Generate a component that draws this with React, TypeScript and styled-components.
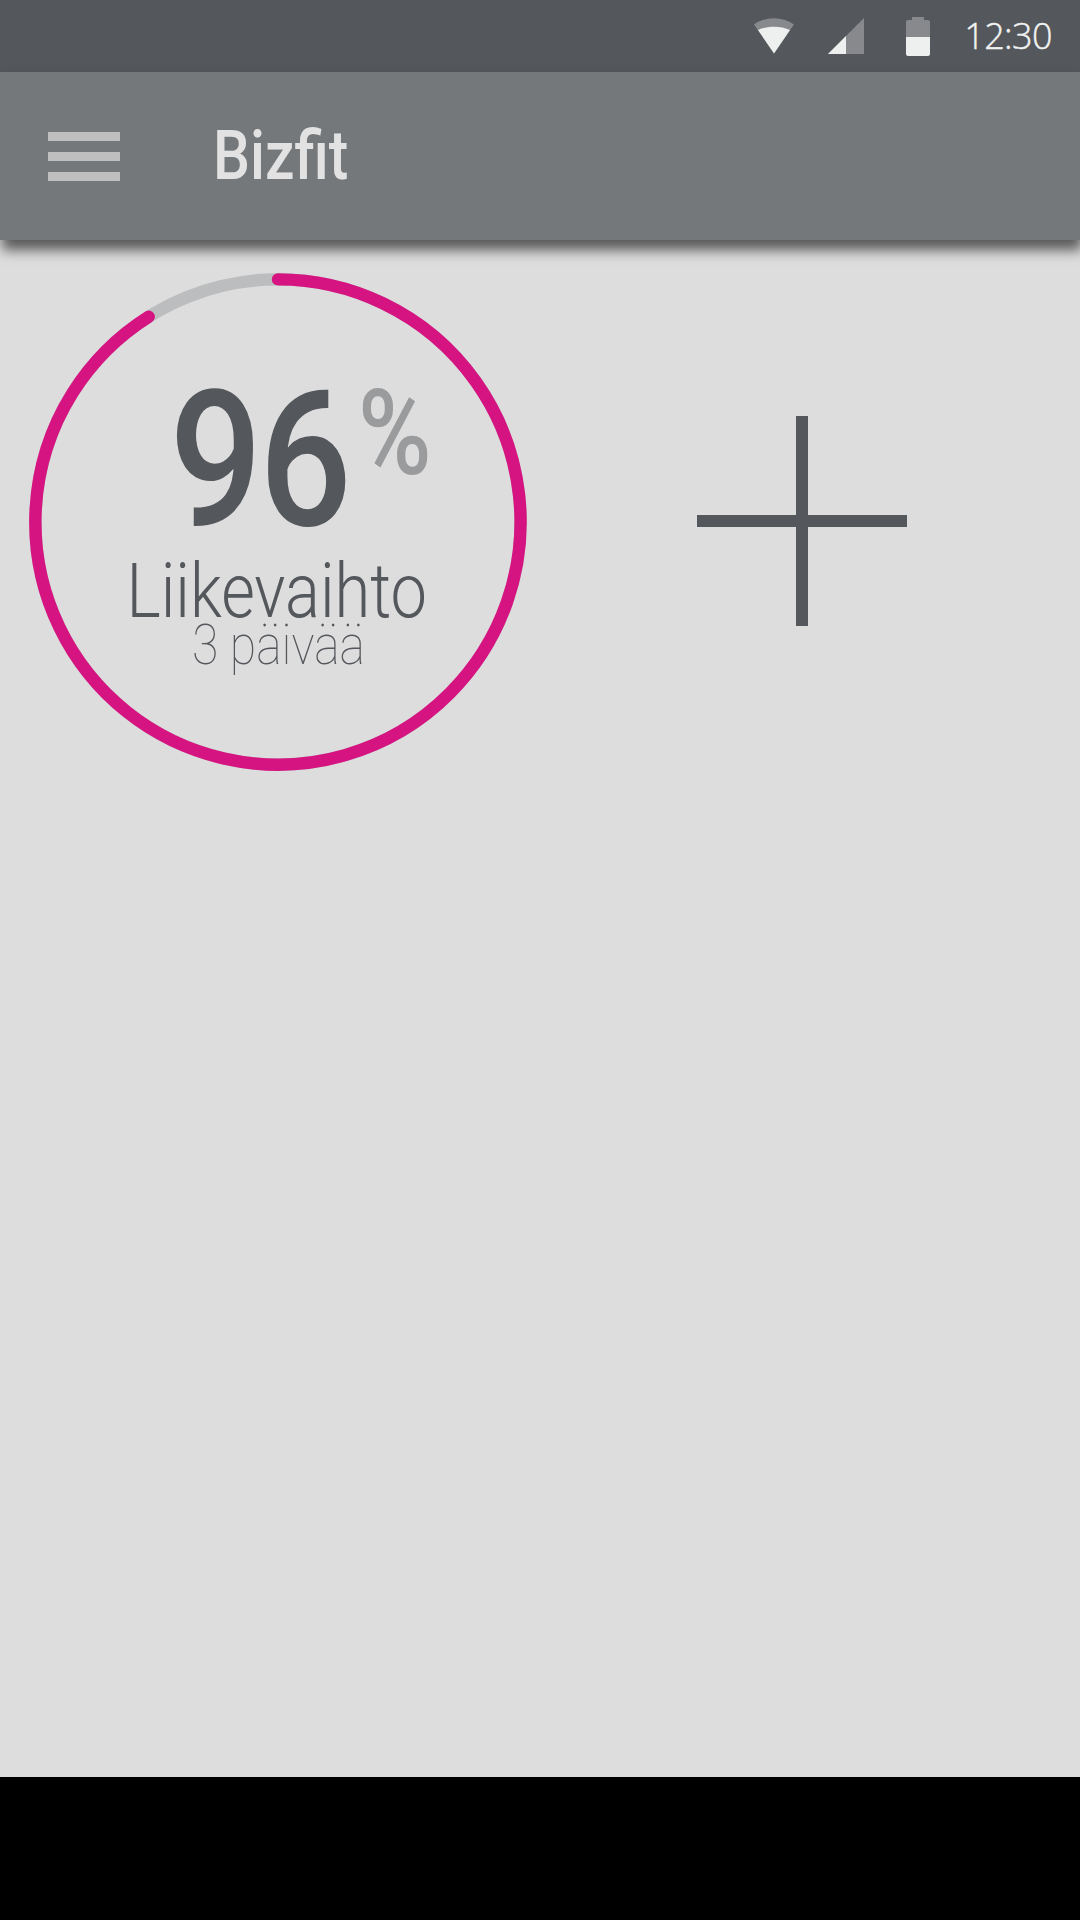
import React from 'react';
import styled, { createGlobalStyle } from 'styled-components';

const GlobalStyle = createGlobalStyle`
    html,
    body {
        margin: 0;
        padding: 0;
        background: #000000;
    }
`;

const Screen = styled.div`
    width: 1080px;
    height: 1920px;
    display: flex;
    flex-direction: column;
    overflow: hidden;
    font-family: Roboto, 'Liberation Sans', sans-serif;
`;

const StatusBar = styled.div`
    height: 72px;
    flex: none;
    display: flex;
    align-items: center;
    justify-content: flex-end;
    padding-right: 28px;
    background: #54575b;
`;

const StatusIcon = styled.svg<{ gap: number }>`
    display: block;
    flex: none;
    margin-right: ${(props) => props.gap}px;
`;

const Clock = styled.span`
    font-family: 'Open Sans', sans-serif;
    font-weight: 300;
    font-size: 36px;
    line-height: 72px;
    color: #f1f2f2;
    letter-spacing: -0.6px;
    -webkit-text-stroke: 0.4px #f1f2f2;
`;

const Toolbar = styled.div`
    position: relative;
    z-index: 1;
    height: 168px;
    flex: none;
    display: flex;
    align-items: center;
    padding-left: 48px;
    background: #75787b;
    box-shadow: 2px 10px 12px rgba(0, 0, 0, 0.6);
`;

const MenuButton = styled.div`
    width: 72px;
    display: flex;
    flex-direction: column;
    gap: 11px;
    margin-right: 93px;
`;

const MenuBar = styled.span`
    display: block;
    height: 9px;
    background: #c0bfbf;
`;

const Title = styled.span`
    font-weight: 500;
    font-size: 69px;
    line-height: 80px;
    color: #e2e2e2;
    display: inline-block;
    transform: scaleX(0.85);
    transform-origin: left center;
`;

const Content = styled.main`
    flex: 1;
    display: flex;
    align-items: flex-start;
    padding: 33px 0 0 29px;
    background: #dddddd;
`;

const GoalRow = styled.div`
    display: flex;
    align-items: center;
`;

const Gauge = styled.div`
    width: 498px;
    height: 498px;
    flex: none;
    display: grid;
    justify-items: center;
`;

const GaugeRing = styled.svg`
    grid-area: 1 / 1;
    display: block;
`;

const GaugeText = styled.div`
    grid-area: 1 / 1;
    display: flex;
    flex-direction: column;
    align-items: center;
    padding-top: 102px;
`;

const ValueRow = styled.div`
    display: flex;
    align-items: flex-start;
    height: 178px;
    padding-left: 14px;
    color: #54575b;
`;

const Value = styled.span`
    font-weight: 500;
    font-size: 190px;
    line-height: 170px;
    letter-spacing: -4px;
    display: inline-block;
    transform: scaleX(0.86);
`;

const Percent = styled.span`
    font-weight: 500;
    font-size: 119px;
    line-height: 118px;
    color: #9a9b9d;
    display: inline-block;
    transform: scaleX(0.84);
    transform-origin: left center;
    margin-left: -5px;
    width: 57px;
`;

const Label = styled.span`
    font-weight: 300;
    font-size: 76px;
    line-height: 76px;
    color: #54575b;
    transform: scaleX(0.855);
    white-space: nowrap;
    margin-left: -2px;
`;

const SubLabel = styled.span`
    font-weight: 100;
    font-size: 56px;
    line-height: 56px;
    color: #54575b;
    transform: scaleX(0.86);
    white-space: nowrap;
    margin-top: -12px;
    padding-left: 2px;
`;

const AddIcon = styled.svg`
    display: block;
    flex: none;
    margin-left: 170px;
    margin-top: -2px;
`;

const NavBar = styled.div`
    height: 143px;
    flex: none;
    background: #000000;
`;

const App: React.FC = () => {
    return (
        <Screen>
            <GlobalStyle />
            <StatusBar>
                <StatusIcon gap={34} width={40} height={36} viewBox="0 0 40 36">
                    <path d="M20 35.5L0 6.5C12 -2 28 -2 40 6.5Z" fill="#88898c" />
                    <path d="M20 35.5L4 12C13 7.5 27 7.5 36 12Z" fill="#eeefef" />
                </StatusIcon>
                <StatusIcon gap={42} width={36} height={36} viewBox="0 0 36 36">
                    <path d="M0 36L36 0V36Z" fill="#88898c" />
                    <path d="M0 36L18 18V36Z" fill="#eeefef" />
                </StatusIcon>
                <StatusIcon gap={34} width={24} height={39} viewBox="0 0 24 39">
                    <path d="M6 0H18V3H22A2 2 0 0 1 24 5V20H0V5A2 2 0 0 1 2 3H6Z" fill="#88898c" />
                    <path d="M0 20H24V37A2 2 0 0 1 22 39H2A2 2 0 0 1 0 37Z" fill="#eeefef" />
                </StatusIcon>
                <Clock>12:30</Clock>
            </StatusBar>
            <Toolbar>
                <MenuButton>
                    <MenuBar />
                    <MenuBar />
                    <MenuBar />
                </MenuButton>
                <Title>Bizfit</Title>
            </Toolbar>
            <Content>
                <GoalRow>
                    <Gauge>
                        <GaugeRing width={498} height={498} viewBox="0 0 498 498">
                            <circle cx={249} cy={249} r={242.6} fill="none" stroke="#bcbdbf" strokeWidth={12.4} />
                            <path
                                d="M249 6.4A242.6 242.6 0 1 1 119.7 43.7"
                                fill="none"
                                stroke="#d61481"
                                strokeWidth={12.4}
                                strokeLinecap="round"
                            />
                        </GaugeRing>
                        <GaugeText>
                            <ValueRow>
                                <Value>96</Value>
                                <Percent>%</Percent>
                            </ValueRow>
                            <Label>Liikevaihto</Label>
                            <SubLabel>3 päivää</SubLabel>
                        </GaugeText>
                    </Gauge>
                    <AddIcon width={210} height={210} viewBox="0 0 210 210">
                        <rect x={99} y={0} width={12} height={210} fill="#54575b" />
                        <rect x={0} y={99} width={210} height={12} fill="#54575b" />
                    </AddIcon>
                </GoalRow>
            </Content>
            <NavBar />
        </Screen>
    );
};

export default App;
